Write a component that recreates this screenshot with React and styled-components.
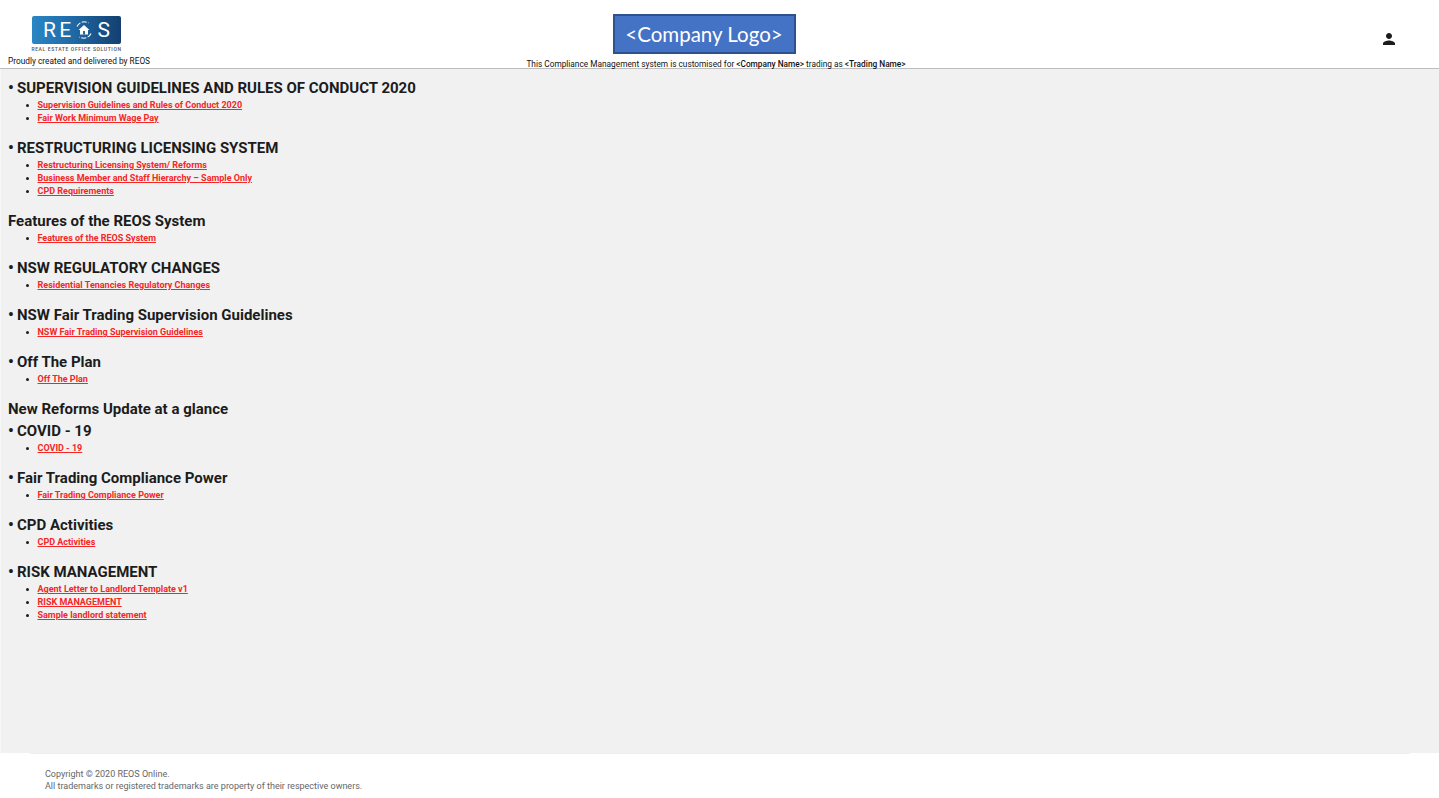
import styled, { createGlobalStyle } from "styled-components";
import { MdPerson } from "react-icons/md";

const GlobalStyle = createGlobalStyle`
  html, body {
    margin: 0;
    padding: 0;
    background: #fff;
    font-family: Roboto, "Liberation Sans", sans-serif;
    color: #1c1c1c;
  }
`;

const Page = styled.div`
  height: 798px;
  display: flex;
  flex-direction: column;
  overflow: hidden;
`;

const Header = styled.header`
  height: 68px;
  flex: none;
  display: grid;
  grid-template-columns: 519px 394px 1fr;
  background: #fff;
  border-bottom: 1px solid #bdbdbd;
`;

const Brand = styled.div`
  padding: 16px 0 0 8px;
  display: flex;
  flex-direction: column;
  align-items: flex-start;
`;

const BrandLogo = styled.div`
  margin-left: 24px;
  width: 89px;
  display: flex;
  flex-direction: column;
  align-items: center;
`;

const BrandPlate = styled.div`
  box-sizing: border-box;
  width: 89px;
  height: 28px;
  padding: 0 11px;
  border-radius: 2px;
  background: linear-gradient(90deg, #2a86c4 0%, #1f6aa6 45%, #143f70 100%);
  display: flex;
  align-items: center;
  justify-content: space-between;
  color: #fff;
  font-size: 21px;
  line-height: 28px;
`;

const BrandTag = styled.div`
  margin-top: 2px;
  font-size: 5px;
  line-height: 7px;
  letter-spacing: 0.62px;
  white-space: nowrap;
  color: #555;
  font-weight: 500;
`;

const BrandCredit = styled.div`
  margin-top: 2px;
  font-size: 8.3px;
  line-height: 12px;
  color: #111;
  white-space: nowrap;
`;

const Center = styled.div`
  padding-top: 14px;
  display: flex;
  flex-direction: column;
  align-items: center;
`;

const CompanyLogo = styled.div`
  box-sizing: border-box;
  width: 183px;
  height: 40px;
  margin-right: 24px;
  background: #4472c4;
  border: 2px solid #2f528f;
  color: #fff;
  font-family: Lato, sans-serif;
  font-size: 20.5px;
  line-height: 36px;
  text-align: center;
  white-space: nowrap;
`;

const Caption = styled.div`
  margin-top: 4px;
  font-size: 8.3px;
  line-height: 12px;
  color: #111;
  white-space: nowrap;
  b {
    font-weight: 500;
  }
`;

const Account = styled.div`
  display: flex;
  justify-content: flex-end;
  align-items: flex-start;
  padding: 30px 41px 0 0;
  svg {
    display: block;
    color: #1c1c1c;
  }
`;

const Content = styled.main`
  flex: 1;
  box-sizing: border-box;
  padding: 8px 8px 0 7px;
  background: #f1f1f1;
  border-left: 1px solid #f8f8f8;
`;

const Section = styled.section`
  margin-bottom: 12px;
`;

const Heading = styled.h3`
  margin: 0;
  padding-top: 1px;
  display: flex;
  align-items: baseline;
  font-size: 15px;
  line-height: 21px;
  font-weight: 700;
  color: #1c1c1c;
  white-space: nowrap;
`;

const Bullet = styled.span`
  width: 9px;
  font-size: 16px;
  line-height: 16px;
  flex: none;
`;

const LinkList = styled.ul`
  margin: 0;
  padding: 0 0 0 29.5px;
  list-style: disc;
  font-size: 9px;
  line-height: 13px;
`;

const LinkItem = styled.li`
  color: #1c1c1c;
`;

const DocLink = styled.a`
  color: #f42626;
  font-weight: 700;
  text-decoration: underline;
`;

const Footer = styled.footer`
  box-sizing: border-box;
  height: 45px;
  flex: none;
  background: #fff;
  padding: 0 29px 0 30px;
`;

const FooterInner = styled.div`
  height: 100%;
  box-sizing: border-box;
  border-top: 1px solid #eeeeee;
  padding: 14px 0 0 15px;
  font-size: 9px;
  line-height: 12px;
  color: #666;
`;

const sections = [
  { title: "SUPERVISION GUIDELINES AND RULES OF CONDUCT 2020", bullet: true, links: ["Supervision Guidelines and Rules of Conduct 2020", "Fair Work Minimum Wage Pay"] },
  { title: "RESTRUCTURING LICENSING SYSTEM", bullet: true, links: ["Restructuring Licensing System/ Reforms", "Business Member and Staff Hierarchy – Sample Only", "CPD Requirements"] },
  { title: "Features of the REOS System", links: ["Features of the REOS System"] },
  { title: "NSW REGULATORY CHANGES", bullet: true, links: ["Residential Tenancies Regulatory Changes"] },
  { title: "NSW Fair Trading Supervision Guidelines", bullet: true, links: ["NSW Fair Trading Supervision Guidelines"] },
  { title: "Off The Plan", bullet: true, links: ["Off The Plan"] },
  { title: "New Reforms Update at a glance" },
  { title: "COVID - 19", bullet: true, links: ["COVID - 19"] },
  { title: "Fair Trading Compliance Power", bullet: true, links: ["Fair Trading Compliance Power"] },
  { title: "CPD Activities", bullet: true, links: ["CPD Activities"] },
  { title: "RISK MANAGEMENT", bullet: true, links: ["Agent Letter to Landlord Template v1", "RISK MANAGEMENT", "Sample landlord statement"] },
];

const HouseMark = () => (
  <svg width="20" height="20" viewBox="0 0 20 20" fill="none">
    <path d="M3 6.5A8 8 0 0 1 14.5 3" stroke="#fff" strokeWidth="1.1" strokeDasharray="5 1.5" />
    <path d="M17 13.5A8 8 0 0 1 5.5 17" stroke="#fff" strokeWidth="1.1" strokeDasharray="5 1.5" />
    <path d="M10 5 15.5 10H14v4.5H6V10H4.500z" fill="#fff" />
    <rect x="9" y="11" width="2" height="3.500" fill="#1f6aa6" />
  </svg>
);

const SectionHeading = ({ section }) => (
  <Heading>
    {section.bullet && <Bullet>•</Bullet>}
    {section.title}
  </Heading>
);

const App = () => {
  return (
    <>
      <GlobalStyle />
      <Page>
        <Header>
          <Brand>
            <BrandLogo>
              <BrandPlate>
                <span>R</span>
                <span>E</span>
                <HouseMark />
                <span>S</span>
              </BrandPlate>
              <BrandTag>REAL ESTATE OFFICE SOLUTION</BrandTag>
            </BrandLogo>
            <BrandCredit>Proudly created and delivered by REOS</BrandCredit>
          </Brand>
          <Center>
            <CompanyLogo>&lt;Company Logo&gt;</CompanyLogo>
            <Caption>
              This Compliance Management system is customised for <b>&lt;Company Name&gt;</b> trading as <b>&lt;Trading Name&gt;</b>
            </Caption>
          </Center>
          <Account>
            <MdPerson size={18} />
          </Account>
        </Header>
        <Content>
          {sections.map((s) =>
            s.links ? (
              <Section key={s.title}>
                <SectionHeading section={s} />
                <LinkList>
                  {s.links.map((l) => (
                    <LinkItem key={l}>
                      <DocLink href="#">{l}</DocLink>
                    </LinkItem>
                  ))}
                </LinkList>
              </Section>
            ) : (
              <SectionHeading key={s.title} section={s} />
            )
          )}
        </Content>
        <Footer>
          <FooterInner>
            <div>Copyright © 2020 REOS Online.</div>
            <div>All trademarks or registered trademarks are property of their respective owners.</div>
          </FooterInner>
        </Footer>
      </Page>
    </>
  );
};

export default App;
